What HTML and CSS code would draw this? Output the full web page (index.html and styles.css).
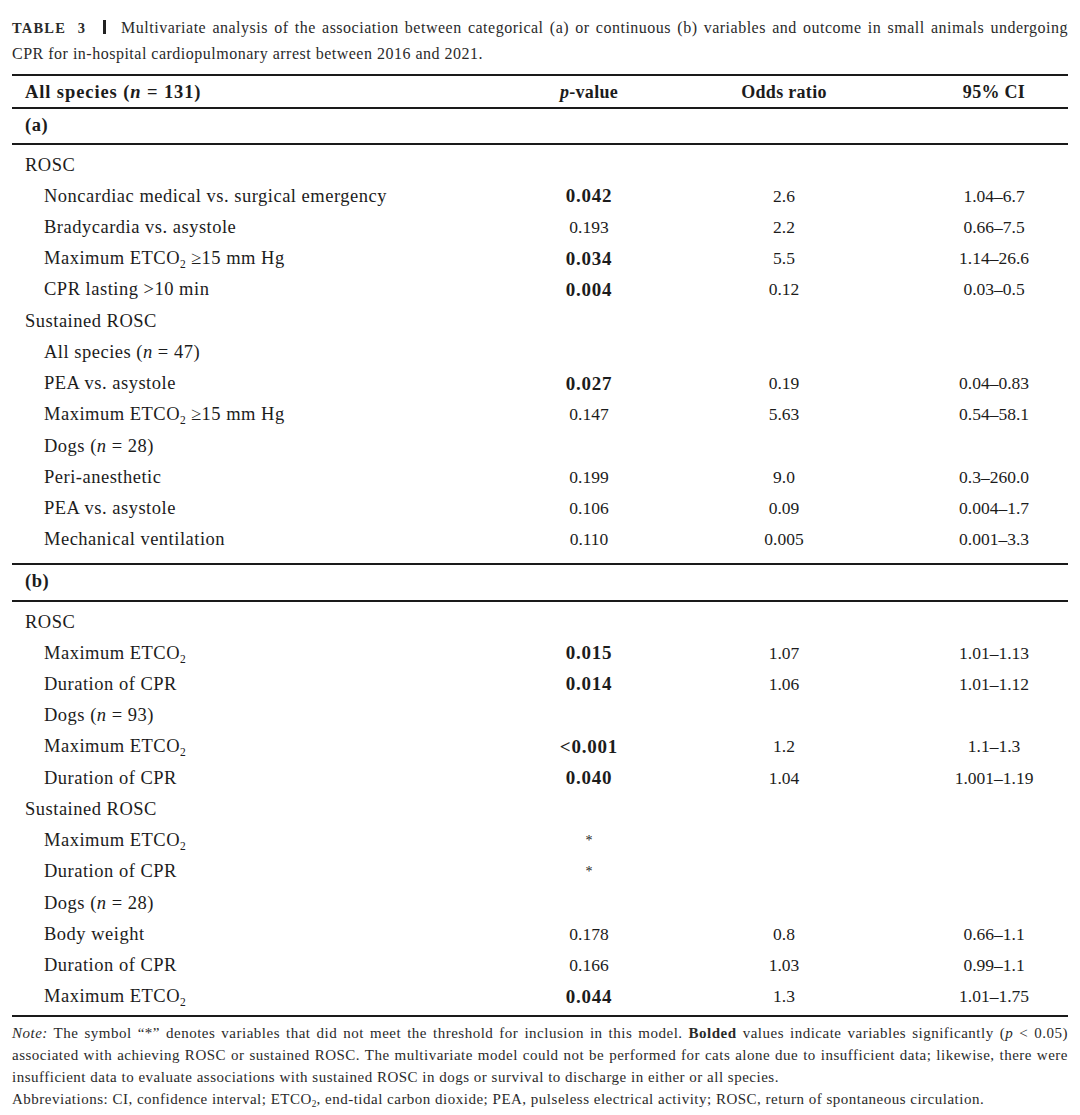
FILE: index.html
```html
<!DOCTYPE html>
<html>
<head>
<meta charset="utf-8">
<link rel="stylesheet" href="styles.css">
</head>
<body>
<div class="page">
  <p class="caption"><span class="label">TABLE 3</span><span class="bar"></span>Multivariate analysis of the association between categorical (a) or continuous (b) variables and outcome in small animals undergoing CPR for in-hospital cardiopulmonary arrest between 2016 and 2021.</p>
  <table class="tbl">
    <colgroup><col class="c1"><col class="c2"><col class="c3"><col class="c4"></colgroup>
    <thead>
      <tr class="head"><th class="l">All species (<i>n</i> = 131)</th><th><i>p</i>-value</th><th>Odds ratio</th><th class="ci">95% CI</th></tr>
    </thead>
    <tbody>
      <tr class="sec"><td class="l" colspan="4">(a)</td></tr>
      <tr class="first"><td class="l">ROSC</td><td></td><td></td><td class="ci"></td></tr>
      <tr><td class="l2">Noncardiac medical vs. surgical emergency</td><td><b>0.042</b></td><td>2.6</td><td class="ci">1.04–6.7</td></tr>
      <tr><td class="l2">Bradycardia vs. asystole</td><td>0.193</td><td>2.2</td><td class="ci">0.66–7.5</td></tr>
      <tr><td class="l2">Maximum ETCO<sub>2</sub> ≥15 mm Hg</td><td><b>0.034</b></td><td>5.5</td><td class="ci">1.14–26.6</td></tr>
      <tr><td class="l2">CPR lasting &gt;10 min</td><td><b>0.004</b></td><td>0.12</td><td class="ci">0.03–0.5</td></tr>
      <tr><td class="l">Sustained ROSC</td><td></td><td></td><td class="ci"></td></tr>
      <tr><td class="l2">All species (<i>n</i> = 47)</td><td></td><td></td><td class="ci"></td></tr>
      <tr><td class="l2">PEA vs. asystole</td><td><b>0.027</b></td><td>0.19</td><td class="ci">0.04–0.83</td></tr>
      <tr><td class="l2">Maximum ETCO<sub>2</sub> ≥15 mm Hg</td><td>0.147</td><td>5.63</td><td class="ci">0.54–58.1</td></tr>
      <tr><td class="l2">Dogs (<i>n</i> = 28)</td><td></td><td></td><td class="ci"></td></tr>
      <tr><td class="l2">Peri-anesthetic</td><td>0.199</td><td>9.0</td><td class="ci">0.3–260.0</td></tr>
      <tr><td class="l2">PEA vs. asystole</td><td>0.106</td><td>0.09</td><td class="ci">0.004–1.7</td></tr>
      <tr class="last"><td class="l2">Mechanical ventilation</td><td>0.110</td><td>0.005</td><td class="ci">0.001–3.3</td></tr>
      <tr class="sec secb"><td class="l" colspan="4">(b)</td></tr>
      <tr class="first"><td class="l">ROSC</td><td></td><td></td><td class="ci"></td></tr>
      <tr><td class="l2">Maximum ETCO<sub>2</sub></td><td><b>0.015</b></td><td>1.07</td><td class="ci">1.01–1.13</td></tr>
      <tr><td class="l2">Duration of CPR</td><td><b>0.014</b></td><td>1.06</td><td class="ci">1.01–1.12</td></tr>
      <tr><td class="l2">Dogs (<i>n</i> = 93)</td><td></td><td></td><td class="ci"></td></tr>
      <tr><td class="l2">Maximum ETCO<sub>2</sub></td><td><b>&lt;0.001</b></td><td>1.2</td><td class="ci">1.1–1.3</td></tr>
      <tr><td class="l2">Duration of CPR</td><td><b>0.040</b></td><td>1.04</td><td class="ci">1.001–1.19</td></tr>
      <tr><td class="l">Sustained ROSC</td><td></td><td></td><td class="ci"></td></tr>
      <tr><td class="l2">Maximum ETCO<sub>2</sub></td><td class="star">*</td><td></td><td class="ci"></td></tr>
      <tr><td class="l2">Duration of CPR</td><td class="star">*</td><td></td><td class="ci"></td></tr>
      <tr><td class="l2">Dogs (<i>n</i> = 28)</td><td></td><td></td><td class="ci"></td></tr>
      <tr><td class="l2">Body weight</td><td>0.178</td><td>0.8</td><td class="ci">0.66–1.1</td></tr>
      <tr><td class="l2">Duration of CPR</td><td>0.166</td><td>1.03</td><td class="ci">0.99–1.1</td></tr>
      <tr class="lastb"><td class="l2">Maximum ETCO<sub>2</sub></td><td><b>0.044</b></td><td>1.3</td><td class="ci">1.01–1.75</td></tr>
    </tbody>
  </table>
  <div class="notes">
    <p class="note"><i>Note:</i> The symbol “*” denotes variables that did not meet the threshold for inclusion in this model. <b>Bolded</b> values indicate variables significantly (<i>p</i> &lt; 0.05) associated with achieving ROSC or sustained ROSC. The multivariate model could not be performed for cats alone due to insufficient data; likewise, there were insufficient data to evaluate associations with sustained ROSC in dogs or survival to discharge in either or all species.</p>
    <p class="abbr">Abbreviations: CI, confidence interval; ETCO<sub>2</sub>, end-tidal carbon dioxide; PEA, pulseless electrical activity; ROSC, return of spontaneous circulation.</p>
  </div>
</div>
</body>
</html>
```

FILE: styles.css
```css
html, body {
  margin: 0;
  padding: 0;
  background: #ffffff;
}
body {
  font-family: "Liberation Serif", "DejaVu Serif", serif;
  color: #1c1c1c;
}
.page {
  width: 1056px;
  padding: 15px 12px 0 12px;
}
.caption {
  margin: 0;
  font-size: 16px;
  letter-spacing: 0.5px;
  line-height: 25px;
  text-align: justify;
  color: #2a2a2a;
}
.caption .label {
  font-weight: bold;
  font-size: 14.5px;
  letter-spacing: 1.2px;
  word-spacing: 5px;
}
.caption .bar {
  display: inline-block;
  width: 3px;
  height: 14px;
  background: #222;
  margin: 0 15px 0 17px;
  vertical-align: -1px;
}
.tbl {
  margin-top: 8px;
  width: 1056px;
  border-collapse: collapse;
  table-layout: fixed;
  font-size: 17.5px;
}
.c1 { width: 488px; }
.c2 { width: 178px; }
.c3 { width: 212px; }
.c4 { width: 178px; }
.tbl th, .tbl td {
  padding: 0;
  height: 31.25px;
  text-align: center;
  vertical-align: middle;
  font-weight: normal;
  white-space: nowrap;
}
.tbl .ci { padding-left: 30px; }
.tbl .l, .tbl .l2 {
  text-align: left;
  font-size: 18.5px;
  letter-spacing: 0.5px;
}
.tbl .l { padding-left: 13px; }
.tbl .l2 { padding-left: 32px; }
.tbl b { font-size: 19px; letter-spacing: 0.8px; }
.tbl thead tr.head th {
  font-weight: bold;
  height: 30px;
  padding-top: 1px;
  border-top: 2.5px solid #1a1a1a;
  border-bottom: 2px solid #1a1a1a;
}
.tbl thead tr.head th.l { letter-spacing: 0.9px; }
.tbl thead tr.head th:not(.l) { font-size: 18px; letter-spacing: 0.3px; }
.tbl tr.sec td {
  font-weight: bold;
  height: 32.5px;
  padding-bottom: 1px;
  border-bottom: 2.5px solid #1a1a1a;
}
.tbl tr.secb td {
  border-top: 2.5px solid #1a1a1a;
  border-bottom: 2px solid #1a1a1a;
  height: 33px;
  padding-bottom: 2px;
}
.tbl tr.first td { height: 31px; padding-top: 5px; }
.tbl tr.last td { height: 31.25px; padding-bottom: 7px; }
.tbl tr.lastb td { height: 31.25px; padding-bottom: 2px; border-bottom: 2.5px solid #1a1a1a; }
.tbl sub, .notes sub {
  font-size: 0.62em;
  vertical-align: -0.35em;
  line-height: 0;
  letter-spacing: 0;
}
.star { font-size: 14px; }
.notes {
  font-size: 15px;
  letter-spacing: 0.5px;
  line-height: 22px;
  color: #2a2a2a;
  padding-top: 5px;
}
.note {
  margin: 0;
  text-align: justify;
}
.abbr {
  margin: 0;
}
```
